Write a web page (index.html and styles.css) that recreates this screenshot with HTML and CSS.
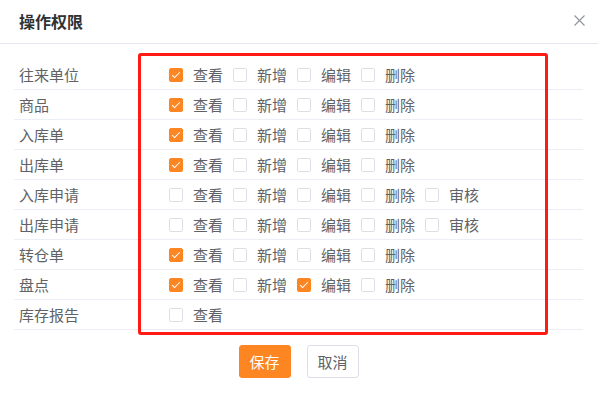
FILE: index.html
```html
<!DOCTYPE html>
<html lang="zh">
<head>
<meta charset="utf-8">
<link rel="stylesheet" href="styles.css">
</head>
<body>
<div class="dialog">
  <div class="header">
    <span class="title">操作权限</span>
    <span class="close">
      <svg width="11" height="11" viewBox="0 0 11 11"><path d="M0.5 0.5 L10.5 10.5 M10.5 0.5 L0.5 10.5" stroke="#909399" stroke-width="1.1" fill="none"/></svg>
    </span>
  </div>
  <div class="body">
    <div class="table">
      <div class="row"><div class="label">往来单位</div><div class="perms">
        <label class="cb on"><i></i>查看</label><label class="cb"><i></i>新增</label><label class="cb"><i></i>编辑</label><label class="cb"><i></i>删除</label></div></div>
      <div class="row"><div class="label">商品</div><div class="perms">
        <label class="cb on"><i></i>查看</label><label class="cb"><i></i>新增</label><label class="cb"><i></i>编辑</label><label class="cb"><i></i>删除</label></div></div>
      <div class="row"><div class="label">入库单</div><div class="perms">
        <label class="cb on"><i></i>查看</label><label class="cb"><i></i>新增</label><label class="cb"><i></i>编辑</label><label class="cb"><i></i>删除</label></div></div>
      <div class="row"><div class="label">出库单</div><div class="perms">
        <label class="cb on"><i></i>查看</label><label class="cb"><i></i>新增</label><label class="cb"><i></i>编辑</label><label class="cb"><i></i>删除</label></div></div>
      <div class="row"><div class="label">入库申请</div><div class="perms">
        <label class="cb"><i></i>查看</label><label class="cb"><i></i>新增</label><label class="cb"><i></i>编辑</label><label class="cb"><i></i>删除</label><label class="cb"><i></i>审核</label></div></div>
      <div class="row"><div class="label">出库申请</div><div class="perms">
        <label class="cb"><i></i>查看</label><label class="cb"><i></i>新增</label><label class="cb"><i></i>编辑</label><label class="cb"><i></i>删除</label><label class="cb"><i></i>审核</label></div></div>
      <div class="row"><div class="label">转仓单</div><div class="perms">
        <label class="cb on"><i></i>查看</label><label class="cb"><i></i>新增</label><label class="cb"><i></i>编辑</label><label class="cb"><i></i>删除</label></div></div>
      <div class="row"><div class="label">盘点</div><div class="perms">
        <label class="cb on"><i></i>查看</label><label class="cb"><i></i>新增</label><label class="cb on"><i></i>编辑</label><label class="cb"><i></i>删除</label></div></div>
      <div class="row"><div class="label">库存报告</div><div class="perms">
        <label class="cb"><i></i>查看</label></div></div>
      <div class="highlight"></div>
    </div>
    <div class="footer">
      <button class="btn primary">保存</button>
      <button class="btn">取消</button>
    </div>
  </div>
</div>
</body>
</html>
```
FILE: styles.css
```css
* { box-sizing: border-box; }
html, body { margin: 0; padding: 0; background: #fff; }
body {
  font-family: "Noto Sans CJK SC", "Noto Sans", sans-serif;
  color: #606266;
  font-size: 15px;
}
.dialog { width: 598px; height: 393px; }
.header {
  height: 44px;
  border-bottom: 1px solid #e4e7ed;
  display: flex;
  align-items: center;
  justify-content: space-between;
  padding: 0 13px 2px 19px;
}
.title { font-size: 16px; font-weight: bold; color: #303133; }
.close { display: flex; width: 11px; height: 11px; }
.body { padding: 16px 15px 0 14px; }
.table { position: relative; }
.row {
  display: flex;
  align-items: center;
  height: 30px;
  border-bottom: 1px solid #ebeef5;
}
.label { width: 155px; padding-left: 5px; color: #606266; }
.perms { display: flex; align-items: center; }
.cb {
  display: flex;
  align-items: center;
  width: 64px;
  color: #606266;
  line-height: 1;
}
.cb i {
  display: block;
  width: 14px;
  height: 14px;
  border: 1px solid #dcdfe6;
  border-radius: 2px;
  margin-right: 10px;
  position: relative;
  background: #fff;
}
.cb.on i { background: #fd8623; border-color: #fd8623; }
.cb.on i::after {
  content: "";
  position: absolute;
  left: 4px;
  top: 1px;
  width: 3px;
  height: 7px;
  border: 1px solid #fff;
  border-left: 0;
  border-top: 0;
  transform: rotate(45deg);
}
.highlight {
  position: absolute;
  left: 124px;
  top: -7px;
  width: 410px;
  height: 282px;
  border: 3px solid #ff1a14;
  border-radius: 3px;
  pointer-events: none;
}
.footer {
  display: flex;
  justify-content: center;
  gap: 16px;
  padding-top: 15px;
}
.btn {
  font-family: inherit;
  font-size: 15px;
  height: 33px;
  width: 52px;
  padding: 0;
  border: 1px solid #dcdfe6;
  border-radius: 3px;
  background: #fff;
  color: #606266;
}
.btn.primary { background: #fd8623; border-color: #fd8623; color: #fff; }
```
